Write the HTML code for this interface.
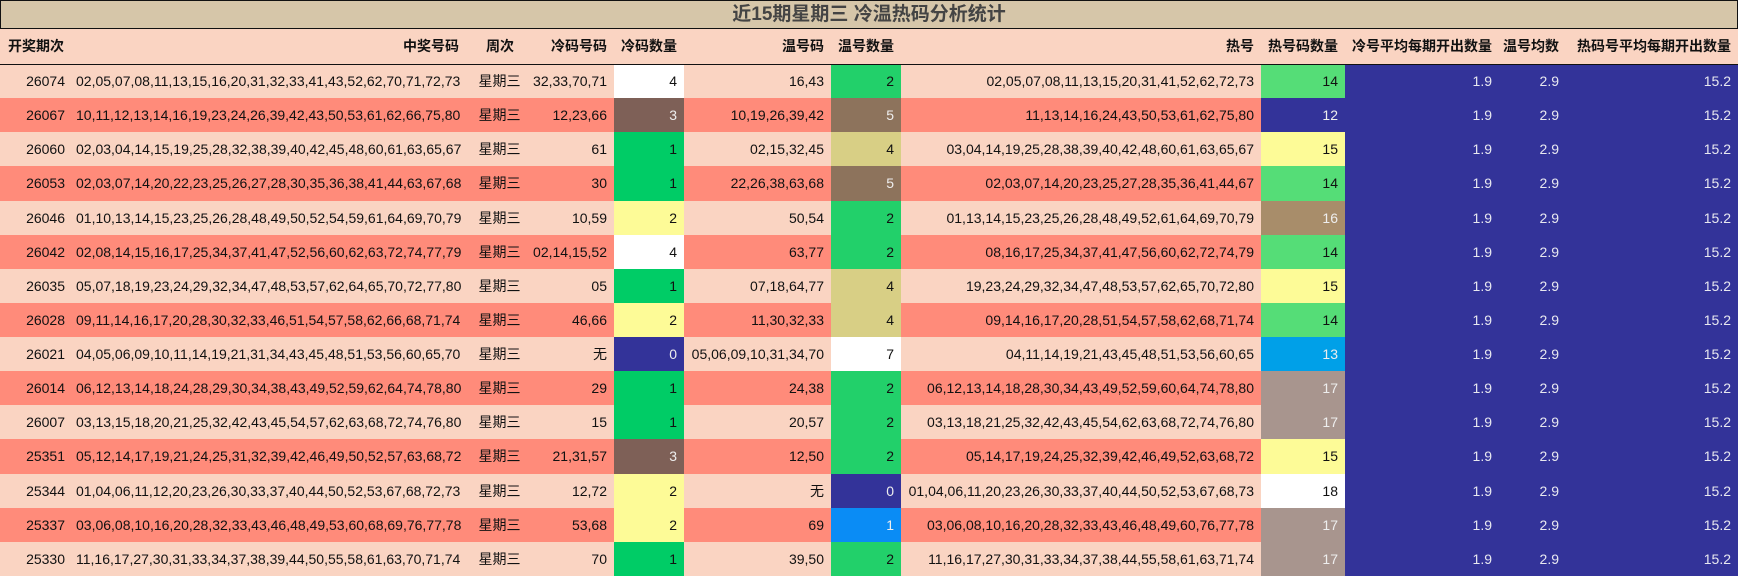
<!DOCTYPE html>
<html><head><meta charset="utf-8"><style>
*{margin:0;padding:0;box-sizing:border-box}
body{width:1738px;height:576px;overflow:hidden;background:#fff;font-family:"Liberation Sans","Noto Sans CJK SC",sans-serif;font-size:14px;color:#111}
.title{position:absolute;left:0;top:0;width:1738px;height:29px;background:#d6c6a9;border:1px solid #111;text-align:center;font-weight:bold;font-size:19px;line-height:27px;color:#444}
table{position:absolute;left:0;top:29px;border-collapse:collapse;table-layout:fixed;width:1738px}
td,th{padding:0 7px 0 4px;text-align:right;white-space:nowrap;overflow:hidden}
th{height:35px;font-weight:bold;background:#fad4c2;border-bottom:1px solid #111}
td{height:34.13px}
tr.l td{background:#fad4c2}
tr.s td{background:#ff8b7a}
td.c{text-align:center;padding-left:9px;padding-right:2px}
td.b{background:#333399!important;color:#e8e8f0}
.w{background:#fff!important}.g{background:#00cc66!important}.g2{background:#22d06a!important}
.lg{background:#55dd77!important}.y{background:#fdfb97!important}.k{background:#d8cf85!important}
.br{background:#7e6057!important;color:#eee}.br2{background:#8d735c!important;color:#eee}
.tan{background:#a88d6a!important;color:#eee}.gb{background:#a8958e!important;color:#eee}
.nv{background:#333399!important;color:#eee}.bl{background:#00a0e8!important;color:#eee}.bl2{background:#0a8cf5!important;color:#eee}
</style></head><body>
<div class="title">近15期星期三 冷温热码分析统计</div>
<table>
<colgroup><col style="width:72px"><col style="width:394px"><col style="width:60px"><col style="width:88px"><col style="width:70px"><col style="width:147px"><col style="width:70px"><col style="width:360px"><col style="width:84px"><col style="width:154px"><col style="width:67px"><col style="width:172px"></colgroup>
<tr><th style="text-align:left;padding-left:8px">开奖期次</th><th>中奖号码</th><th style="text-align:right;padding-right:12px">周次</th><th>冷码号码</th><th>冷码数量</th><th>温号码</th><th>温号数量</th><th>热号</th><th>热号码数量</th><th>冷号平均每期开出数量</th><th>温号均数</th><th>热码号平均每期开出数量</th></tr>
<tr class="l"><td>26074</td><td>02,05,07,08,11,13,15,16,20,31,32,33,41,43,52,62,70,71,72,73</td><td class="c">星期三</td><td>32,33,70,71</td><td class="w">4</td><td>16,43</td><td class="g2">2</td><td>02,05,07,08,11,13,15,20,31,41,52,62,72,73</td><td class="lg">14</td><td class="b">1.9</td><td class="b">2.9</td><td class="b">15.2</td></tr>
<tr class="s"><td>26067</td><td>10,11,12,13,14,16,19,23,24,26,39,42,43,50,53,61,62,66,75,80</td><td class="c">星期三</td><td>12,23,66</td><td class="br">3</td><td>10,19,26,39,42</td><td class="br2">5</td><td>11,13,14,16,24,43,50,53,61,62,75,80</td><td class="nv">12</td><td class="b">1.9</td><td class="b">2.9</td><td class="b">15.2</td></tr>
<tr class="l"><td>26060</td><td>02,03,04,14,15,19,25,28,32,38,39,40,42,45,48,60,61,63,65,67</td><td class="c">星期三</td><td>61</td><td class="g">1</td><td>02,15,32,45</td><td class="k">4</td><td>03,04,14,19,25,28,38,39,40,42,48,60,61,63,65,67</td><td class="y">15</td><td class="b">1.9</td><td class="b">2.9</td><td class="b">15.2</td></tr>
<tr class="s"><td>26053</td><td>02,03,07,14,20,22,23,25,26,27,28,30,35,36,38,41,44,63,67,68</td><td class="c">星期三</td><td>30</td><td class="g">1</td><td>22,26,38,63,68</td><td class="br2">5</td><td>02,03,07,14,20,23,25,27,28,35,36,41,44,67</td><td class="lg">14</td><td class="b">1.9</td><td class="b">2.9</td><td class="b">15.2</td></tr>
<tr class="l"><td>26046</td><td>01,10,13,14,15,23,25,26,28,48,49,50,52,54,59,61,64,69,70,79</td><td class="c">星期三</td><td>10,59</td><td class="y">2</td><td>50,54</td><td class="g2">2</td><td>01,13,14,15,23,25,26,28,48,49,52,61,64,69,70,79</td><td class="tan">16</td><td class="b">1.9</td><td class="b">2.9</td><td class="b">15.2</td></tr>
<tr class="s"><td>26042</td><td>02,08,14,15,16,17,25,34,37,41,47,52,56,60,62,63,72,74,77,79</td><td class="c">星期三</td><td>02,14,15,52</td><td class="w">4</td><td>63,77</td><td class="g2">2</td><td>08,16,17,25,34,37,41,47,56,60,62,72,74,79</td><td class="lg">14</td><td class="b">1.9</td><td class="b">2.9</td><td class="b">15.2</td></tr>
<tr class="l"><td>26035</td><td>05,07,18,19,23,24,29,32,34,47,48,53,57,62,64,65,70,72,77,80</td><td class="c">星期三</td><td>05</td><td class="g">1</td><td>07,18,64,77</td><td class="k">4</td><td>19,23,24,29,32,34,47,48,53,57,62,65,70,72,80</td><td class="y">15</td><td class="b">1.9</td><td class="b">2.9</td><td class="b">15.2</td></tr>
<tr class="s"><td>26028</td><td>09,11,14,16,17,20,28,30,32,33,46,51,54,57,58,62,66,68,71,74</td><td class="c">星期三</td><td>46,66</td><td class="y">2</td><td>11,30,32,33</td><td class="k">4</td><td>09,14,16,17,20,28,51,54,57,58,62,68,71,74</td><td class="lg">14</td><td class="b">1.9</td><td class="b">2.9</td><td class="b">15.2</td></tr>
<tr class="l"><td>26021</td><td>04,05,06,09,10,11,14,19,21,31,34,43,45,48,51,53,56,60,65,70</td><td class="c">星期三</td><td>无</td><td class="nv">0</td><td>05,06,09,10,31,34,70</td><td class="w">7</td><td>04,11,14,19,21,43,45,48,51,53,56,60,65</td><td class="bl">13</td><td class="b">1.9</td><td class="b">2.9</td><td class="b">15.2</td></tr>
<tr class="s"><td>26014</td><td>06,12,13,14,18,24,28,29,30,34,38,43,49,52,59,62,64,74,78,80</td><td class="c">星期三</td><td>29</td><td class="g">1</td><td>24,38</td><td class="g2">2</td><td>06,12,13,14,18,28,30,34,43,49,52,59,60,64,74,78,80</td><td class="gb">17</td><td class="b">1.9</td><td class="b">2.9</td><td class="b">15.2</td></tr>
<tr class="l"><td>26007</td><td>03,13,15,18,20,21,25,32,42,43,45,54,57,62,63,68,72,74,76,80</td><td class="c">星期三</td><td>15</td><td class="g">1</td><td>20,57</td><td class="g2">2</td><td>03,13,18,21,25,32,42,43,45,54,62,63,68,72,74,76,80</td><td class="gb">17</td><td class="b">1.9</td><td class="b">2.9</td><td class="b">15.2</td></tr>
<tr class="s"><td>25351</td><td>05,12,14,17,19,21,24,25,31,32,39,42,46,49,50,52,57,63,68,72</td><td class="c">星期三</td><td>21,31,57</td><td class="br">3</td><td>12,50</td><td class="g2">2</td><td>05,14,17,19,24,25,32,39,42,46,49,52,63,68,72</td><td class="y">15</td><td class="b">1.9</td><td class="b">2.9</td><td class="b">15.2</td></tr>
<tr class="l"><td>25344</td><td>01,04,06,11,12,20,23,26,30,33,37,40,44,50,52,53,67,68,72,73</td><td class="c">星期三</td><td>12,72</td><td class="y">2</td><td>无</td><td class="nv">0</td><td>01,04,06,11,20,23,26,30,33,37,40,44,50,52,53,67,68,73</td><td class="w">18</td><td class="b">1.9</td><td class="b">2.9</td><td class="b">15.2</td></tr>
<tr class="s"><td>25337</td><td>03,06,08,10,16,20,28,32,33,43,46,48,49,53,60,68,69,76,77,78</td><td class="c">星期三</td><td>53,68</td><td class="y">2</td><td>69</td><td class="bl2">1</td><td>03,06,08,10,16,20,28,32,33,43,46,48,49,60,76,77,78</td><td class="gb">17</td><td class="b">1.9</td><td class="b">2.9</td><td class="b">15.2</td></tr>
<tr class="l"><td>25330</td><td>11,16,17,27,30,31,33,34,37,38,39,44,50,55,58,61,63,70,71,74</td><td class="c">星期三</td><td>70</td><td class="g">1</td><td>39,50</td><td class="g2">2</td><td>11,16,17,27,30,31,33,34,37,38,44,55,58,61,63,71,74</td><td class="gb">17</td><td class="b">1.9</td><td class="b">2.9</td><td class="b">15.2</td></tr>
</table>
</body></html>
